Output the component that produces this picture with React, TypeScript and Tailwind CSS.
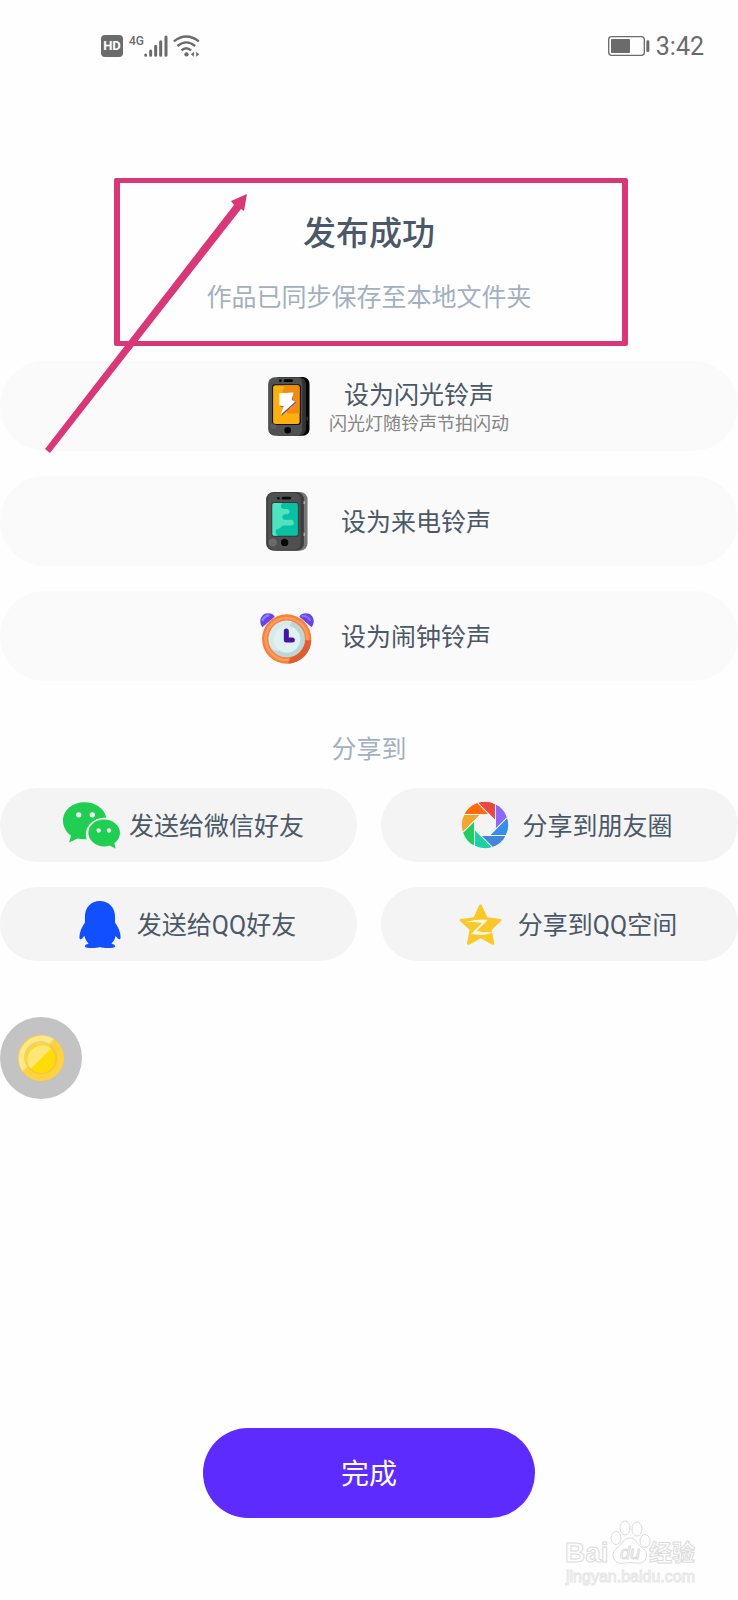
import type { ReactNode } from "react";

function SignalIcon() {
  return (
    <svg viewBox="0 0 72 66" className="h-[22px] w-6" fill="none" stroke="#6b6b6b" strokeWidth="9" strokeLinecap="round" aria-hidden="true">
      <path d="M5 60v1M20 48v13M35 34v27M50 20v41M66 6v55" />
    </svg>
  );
}

function WifiIcon() {
  return (
    <svg viewBox="0 0 80 66" className="h-[22px] w-[27px]" fill="none" stroke="#6b6b6b" strokeWidth="7" aria-hidden="true">
      <path d="M2 19Q39-10 77 19M13 33Q39 11 66 33M25 46Q39 33 54 46" />
      <circle cx="40" cy="58" r="6.500" fill="#6b6b6b" stroke="none" />
      <path d="M62 50v15l-9-7zM69 50v15l9-7z" fill="#6b6b6b" stroke="none" />
    </svg>
  );
}

function BatteryIcon() {
  return (
    <svg viewBox="0 0 126 60" className="h-5 w-[42px]" aria-label="电量">
      <rect x="2" y="2" width="107" height="56" rx="9" fill="none" stroke="#6b6b6b" strokeWidth="4" />
      <rect x="9" y="9" width="57" height="42" rx="3" fill="#6b6b6b" />
      <rect x="115" y="13" width="9" height="35" rx="4" fill="#6b6b6b" />
    </svg>
  );
}

function FlashPhoneIcon() {
  return (
    <svg viewBox="0 0 126 178" className="h-[59px] w-[42px]" aria-hidden="true">
      <rect x="14" y="0" width="111" height="177" rx="20" fill="#060606" />
      <rect x="0" y="1" width="113" height="176" rx="20" fill="#505152" />
      <path d="M92 1q21 2 21 22v132q0 20-22 22 12-7 12-22V23q0-16-11-22z" fill="#323232" />
      <rect x="12" y="22" width="87" height="123" rx="9" fill="#111" />
      <rect x="15" y="25" width="80" height="117" rx="7" fill="#fbb00d" />
      <path d="M45 25h43q7 0 7 7v78H62c-10-2-6-15 4-15h7V52H54c-12-3-13-17-4-19z" fill="#f28c0c" />
      <path d="M38 54l38-3-3 18 12 7-45 42 8-27-12-3z" fill="#74449c" />
      <path d="M34 49l39-2q4 0 3 4l-5 18 11 6-44 39 9-26-13-2z" fill="#fff" />
      <circle cx="37" cy="11" r="4" fill="#050505" />
      <rect x="47" y="7" width="28" height="8" rx="4" fill="#050505" />
      <circle cx="59" cy="161" r="10" fill="#050505" />
      <circle cx="16" cy="148" r="9" fill="#686868" opacity=".5" />
      <path d="M118 120v12" stroke="#454545" strokeWidth="3" />
    </svg>
  );
}

function CallPhoneIcon() {
  return (
    <svg viewBox="0 0 126 178" className="h-[59px] w-[42px]" aria-hidden="true">
      <rect x="12" y="0" width="113" height="177" rx="22" fill="#777" />
      <rect x="0" y="0" width="114" height="177" rx="22" fill="#3d3d3d" />
      <rect x="5" y="3" width="99" height="171" rx="18" fill="#505050" />
      <rect x="16" y="30" width="82" height="105" rx="8" fill="#313b39" />
      <rect x="19" y="33" width="77" height="99" rx="6" fill="#09bfa4" />
      <path d="M24 33h25c-8 8-4 18 6 18h9c9 0 9 16 0 16h-7c-10 0-11 17 0 17h19c10 0 10 17 0 17H54c-9 0-9 9-17 10-12 1-10 12-2 21H24q-5 0-5-5V38q0-5 5-5z" fill="#4fe4bf" />
      <circle cx="37" cy="19" r="4" fill="#070707" />
      <rect x="47" y="14" width="28" height="9" rx="4" fill="#070707" />
      <circle cx="56" cy="152" r="11" fill="#070707" />
      <circle cx="20" cy="152" r="12" fill="#6b6b6b" />
      <path d="M115 28v8M115 123v10" stroke="#b8b8b8" strokeWidth="4" />
    </svg>
  );
}

function AlarmIcon() {
  return (
    <svg viewBox="0 0 162 153" className="mt-1 h-[51px] w-[54px]" aria-hidden="true">
      <path d="M7 43C-7 22 5 1 24 1q14 0 20 10z" fill="#6744ea" />
      <path d="M155 43c14-21 2-42-17-42q-14 0-20 10z" fill="#6744ea" />
      <path d="M8 21Q13 9 25 7" fill="none" stroke="#8e80ff" strokeWidth="7" strokeLinecap="round" />
      <path d="M125 9q20-2 26 15" fill="none" stroke="#8e70f8" strokeWidth="6" />
      <circle cx="80" cy="78" r="74" fill="#f68138" />
      <circle cx="80" cy="78" r="63" fill="none" stroke="#ff9b61" strokeWidth="8" />
      <path d="M154 82a74 74 0 0 1-69 70l5-18a58 58 0 0 0 46-52z" fill="#df5d31" />
      <circle cx="80" cy="78" r="55" fill="#bdd6d9" />
      <path d="M33 105a55 55 0 0 1 63-80L54 115q-14-2-21-10z" fill="#d8e9e9" />
      <circle cx="81" cy="79" r="40" fill="#dff1f0" />
      <path d="M79 54v27h18" fill="none" stroke="#4515a5" strokeWidth="15" strokeLinecap="round" strokeLinejoin="round" />
    </svg>
  );
}

function WechatIcon() {
  return (
    <svg viewBox="0 0 171 140" className="h-[47px] w-[57px]" aria-hidden="true">
      <path d="M65 0C28 0 0 24 0 56c0 18 9 34 24 45l-6 20 26-12c8 2 17 3 27 2-10-33 15-64 59-65C124 18 97 0 65 0z" fill="#20cf51" />
      <path d="M123 52c-27 0-47 18-47 40s21 41 47 41q9 0 17-3l18 10-4-17c11-8 17-18 17-31 0-22-21-40-48-40z" fill="#20cf51" stroke="#f4f4f4" strokeWidth="8" paintOrder="stroke" />
      <g fill="#f4f4f4">
        <circle cx="47" cy="38" r="8" />
        <circle cx="88" cy="38" r="8" />
        <circle cx="107" cy="85" r="6.500" />
        <circle cx="138" cy="85" r="6.500" />
      </g>
    </svg>
  );
}

function QQIcon() {
  return (
    <svg viewBox="0 0 125 142" className="h-[47px] w-[42px]" aria-hidden="true">
      <path d="M62 0C35 0 17 20 17 48v18C6 81-2 100 1 114c3 4 9 0 14-9 3 10 7 18 13 24-8 2-12 5-11 9 2 5 34 5 45 1 12 4 44 4 46-1 1-4-3-7-11-9 6-6 11-14 13-24 5 9 11 13 14 9 3-14-5-33-16-48V48C108 20 89 0 62 0z" fill="#124fff" />
    </svg>
  );
}

const blades = [
  { angle: 0, color: "#ff6907" },
  { angle: 45, color: "#ed4540" },
  { angle: 90, color: "#8c68ff" },
  { angle: 135, color: "#338fe7" },
  { angle: 180, color: "#4385da" },
  { angle: 225, color: "#1bd2a5" },
  { angle: 270, color: "#21cc61" },
  { angle: 315, color: "#f4a52c" },
];

function MomentsIcon() {
  return (
    <svg viewBox="-73 -73 146 146" className="size-12" aria-hidden="true">
      {blades.map((b) => (
        <path key={b.angle} d="M13-32H-64.500A72 72 0 0 1-23.200-68.200Z" transform={`rotate(${b.angle})`} fill={b.color} stroke="#f4f4f4" strokeWidth="3" />
      ))}
    </svg>
  );
}

function QzoneIcon() {
  return (
    <svg viewBox="0 0 127 123" className="h-[41px] w-[43px]" aria-hidden="true">
      <path d="M60 3q4-5 7 0l17 37 39 5q7 1 2 6L97 78l8 40q0 6-6 4L64 103l-35 19q-6 2-6-4l8-40L2 51q-4-5 2-6l39-5z" fill="#fbc82b" />
      <path d="M17 55Q50 44 86 47L52 81Q80 87 107 83 76 97 35 90L68 57Q42 52 17 55Z" fill="#fff8e2" />
    </svg>
  );
}

function CoinIcon() {
  return (
    <svg viewBox="0 0 138 138" className="size-[46px]" aria-hidden="true">
      <circle cx="69" cy="69" r="69" fill="#ffd23f" />
      <path d="M13 108A69 69 0 0 1 108 13z" fill="#ffe88a" />
      <circle cx="69" cy="69" r="49" fill="#f8c63b" />
      <path d="M30 99A49 49 0 0 1 99 30z" fill="#f4d161" />
      <circle cx="69" cy="71" r="43" fill="#ffdb08" />
      <path d="M38 101A43 43 0 0 1 99 41z" fill="#ffe777" />
    </svg>
  );
}

function Watermark() {
  return (
    <svg
      viewBox="0 0 140 74"
      className="pointer-events-none absolute right-9 bottom-3 h-[74px] w-[140px]"
      fill="#fefefe"
      stroke="#dcdcdc"
      strokeWidth="1"
      fontFamily="'Liberation Sans', 'Noto Sans CJK SC', sans-serif"
    >
      <text x="3" y="48" fontSize="28" fontWeight="700">Bai</text>
      <g>
        <ellipse cx="54" cy="24" rx="5" ry="6.500" />
        <ellipse cx="63" cy="14" rx="5" ry="7" />
        <ellipse cx="75" cy="15" rx="5" ry="7" />
        <ellipse cx="83" cy="27" rx="5" ry="6.500" />
        <path d="M68 24c-7 0-8 6-13 10-4 3-5 7-3 11s6 5 11 4q5-1 10 0c6 1 10-1 11-5 2-5-1-8-5-11s-5-9-11-9z" />
      </g>
      <text x="58" y="45" fontSize="18" fontStyle="italic">du</text>
      <text x="87" y="47" fontSize="23" fontWeight="700">经验</text>
      <text x="4" y="68" fontSize="16" stroke="#e6e6e6">jingyan.baidu.com</text>
    </svg>
  );
}

function Option({ icon, label, caption }: { icon: ReactNode; label: string; caption?: string }) {
  return (
    <button type="button" className={`flex h-[90px] w-full items-center justify-center rounded-full bg-[#fafafa] ${caption ? "gap-1 pl-6" : "gap-[18px] pl-1"}`}>
      <span className="flex w-[72px] justify-center">{icon}</span>
      <span className="flex flex-col items-center pt-1">
        <span className="text-[25px] leading-8">{label}</span>
        {caption && <span className="text-[18px] leading-6 text-[#858585]">{caption}</span>}
      </span>
    </button>
  );
}

function Share({ icon, label }: { icon: ReactNode; label: string }) {
  return (
    <button type="button" className="flex h-[74px] items-center justify-center rounded-full bg-[#f4f4f4] pl-[2px]">
      <span className="flex w-[74px] justify-center">{icon}</span>
      <span className="pt-1 text-[25px] leading-8">{label}</span>
    </button>
  );
}

export default function App() {
  return (
    <div className="relative flex min-h-screen flex-col bg-[#fefefe] font-[Roboto,'Noto_Sans_CJK_SC',sans-serif] text-[#4b5868]">
      <header className="flex h-[90px] items-center justify-between pt-px pr-[34px] pl-[101px] text-[#6b6b6b]">
        <div className="flex items-center">
          <span className="flex h-[22px] w-[22px] items-center justify-center rounded-[4px] bg-[#6b6b6b] text-[13px] font-bold text-white">HD</span>
          <span className="ml-[6px] self-start text-[12px] leading-3 font-medium">4G</span>
          <SignalIcon />
          <span className="ml-[5px] flex">
            <WifiIcon />
          </span>
        </div>
        <div className="flex items-center gap-[6px]">
          <BatteryIcon />
          <time className="pt-[2px] text-[25px] leading-8">3:42</time>
        </div>
      </header>

      <section className="mt-[88px] mr-[110px] ml-[114px] flex h-[168px] flex-col items-center rounded-[2px] border-x-[6px] border-y-[5px] border-[#d93777] pt-[27px] pr-1">
        <h1 className="text-[33px] leading-[48px] font-medium whitespace-nowrap">发布成功</h1>
        <p className="mt-6 text-[25px] leading-8 whitespace-nowrap text-[#a2b0c0]">作品已同步保存至本地文件夹</p>
      </section>

      <main className="mt-[15px] flex flex-col">
        <div className="flex flex-col gap-[25px]">
          <Option icon={<FlashPhoneIcon />} label="设为闪光铃声" caption="闪光灯随铃声节拍闪动" />
          <Option icon={<CallPhoneIcon />} label="设为来电铃声" />
          <Option icon={<AlarmIcon />} label="设为闹钟铃声" />
        </div>

        <h2 className="mt-[53px] text-center text-[25px] leading-8 text-[#a2b0c0]">分享到</h2>

        <div className="mt-[22px] grid grid-cols-2 gap-x-6 gap-y-[25px]">
          <Share icon={<WechatIcon />} label="发送给微信好友" />
          <Share icon={<MomentsIcon />} label="分享到朋友圈" />
          <Share icon={<QQIcon />} label="发送给QQ好友" />
          <Share icon={<QzoneIcon />} label="分享到QQ空间" />
        </div>

        <button type="button" aria-label="金币" className="mt-14 flex size-[82px] items-center justify-center rounded-full bg-[#c3c3c3]">
          <CoinIcon />
        </button>
      </main>

      <footer className="mt-auto flex justify-center pb-[82px]">
        <button type="button" className="h-[90px] w-[332px] rounded-full bg-[#5e2bff] pt-1 text-[28px] leading-9 text-white">
          完成
        </button>
      </footer>

      <svg viewBox="0 0 210 264" className="pointer-events-none absolute top-[191px] left-[42px] h-[264px] w-[210px]" fill="#d93777" aria-hidden="true">
        <path d="M3 258L192 14L189 10L205 3L202 20L199 18L8 262Z" />
      </svg>

      <Watermark />
    </div>
  );
}
